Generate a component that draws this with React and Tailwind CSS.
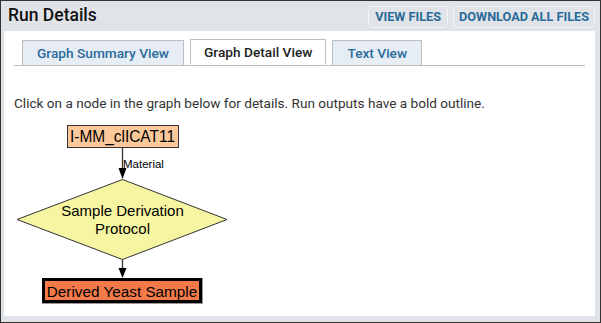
import React from "react";

const GRAPH_FONT = "'Liberation Sans', Arial, sans-serif";

const Graph = () => (
  <svg width="240" height="190" viewBox="0 0 240 190" className="block">
    {/* first node */}
    <rect x="53.5" y="5.5" width="111" height="22" fill="#fdc99b" stroke="#333" strokeWidth="1" />
    <text x="56" y="22" textLength="105" lengthAdjust="spacingAndGlyphs" fontFamily={GRAPH_FONT} fontSize="16" fill="#000">
      I-MM_clICAT11
    </text>
    {/* edge 1 */}
    <line x1="108.5" y1="27.5" x2="108.5" y2="50" stroke="#333" strokeWidth="1.3" />
    <path d="M104.5 48 L108.5 59 L112.5 48 Z" fill="#000" />
    <text x="109" y="48" fontFamily={GRAPH_FONT} fontSize="11.5" fill="#000">
      Material
    </text>
    {/* diamond */}
    <polygon points="108.5,59.5 213,99.5 108.5,139.5 3,99.5" fill="#f6f6a2" stroke="#333" strokeWidth="1" />
    <text x="108.5" y="96" textAnchor="middle" fontFamily={GRAPH_FONT} fontSize="15" fill="#000">
      Sample Derivation
    </text>
    <text x="108.5" y="114" textAnchor="middle" fontFamily={GRAPH_FONT} fontSize="15" fill="#000">
      Protocol
    </text>
    {/* edge 2 */}
    <line x1="108.5" y1="139.5" x2="108.5" y2="150" stroke="#333" strokeWidth="1.3" />
    <path d="M104.5 148 L108.5 158 L112.5 148 Z" fill="#000" />
    {/* output node */}
    <rect x="28" y="158" width="161" height="26" fill="#999" />
    <rect x="29.5" y="159.5" width="157" height="22" fill="#f47a4a" stroke="#000" strokeWidth="3" />
    <text x="108" y="177" textAnchor="middle" fontFamily={GRAPH_FONT} fontSize="15.3" fill="#000">
      Derived Yeast Sample
    </text>
  </svg>
);

const Tab = ({ label, active }) => (
  <div
    className={
      active
        ? "h-[26px] px-[13px] flex items-center bg-white border border-[#bdbdbd] border-b-white -mb-px text-[13.7px] font-medium text-[#222]"
        : "h-[25px] mt-px px-[14px] flex items-center bg-[#e6edf5] border border-[#bdbdbd] border-b-0 text-[13.7px] font-medium text-[#2a6b9a]"
    }
  >
    {label}
  </div>
);

export default function App() {
  return (
    <div
      className="w-[601px] h-[323px] bg-[#e0e4e9] border border-[#333] flex flex-col"
      style={{ fontFamily: "Roboto, 'Liberation Sans', sans-serif" }}
    >
      <div className="h-[30px] flex items-center justify-between pl-[7px] pr-[5px]">
        <h1 className="text-[17.5px] font-medium text-[#111] leading-none">Run Details</h1>
        <div className="flex gap-[5px] pt-[1px]">
          <button className="h-[22px] px-[6px] rounded-[5px] border border-[#f3f5f7] text-[12.7px] font-bold text-[#2a6b9a]">
            VIEW FILES
          </button>
          <button className="h-[22px] px-[5px] rounded-[5px] border border-[#f3f5f7] text-[12.7px] font-bold text-[#2a6b9a]">
            DOWNLOAD ALL FILES
          </button>
        </div>
      </div>
      <div className="flex-1 bg-white ml-[3px] mr-[5px] mb-[6px] pt-[8px] px-[10px]">
        <div className="flex gap-[6px] pl-[8px] border-b border-[#bdbdbd]">
          <Tab label="Graph Summary View" />
          <Tab label="Graph Detail View" active />
          <Tab label="Text View" />
        </div>
        <p className="mt-[29px] text-[13.6px] leading-[16px] text-[#333]">
          Click on a node in the graph below for details. Run outputs have a bold outline.
        </p>
        <div className="mt-[9px]">
          <Graph />
        </div>
      </div>
    </div>
  );
}
